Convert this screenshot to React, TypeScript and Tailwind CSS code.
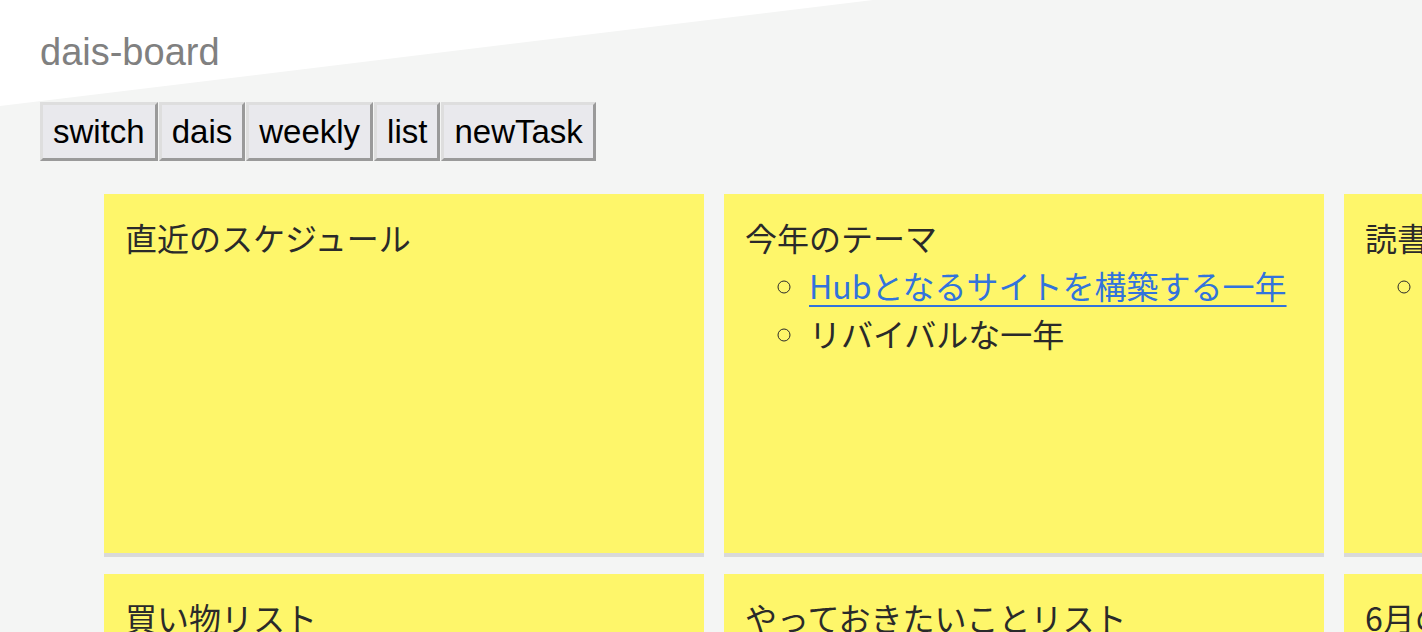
import React from "react";

interface Card {
  title: string;
  items?: { text: string; href?: string }[];
}

const cards: Card[] = [
  { title: "直近のスケジュール" },
  {
    title: "今年のテーマ",
    items: [
      { text: "Hubとなるサイトを構築する一年", href: "#" },
      { text: "リバイバルな一年" },
    ],
  },
  { title: "読書", items: [{ text: "読みたい本" }] },
  { title: "買い物リスト" },
  { title: "やっておきたいことリスト" },
  { title: "6月の目標" },
];

const buttons = ["switch", "dais", "weekly", "list", "newTask"];

export default function App() {
  return (
    <div
      className="relative h-[632px] w-full overflow-hidden bg-[#f4f5f4]"
      style={{ fontFamily: '"Liberation Sans", "Noto Sans CJK JP", sans-serif' }}
    >
      <svg className="absolute left-0 top-0" width="880" height="110">
        <polygon points="0,0 873,0 0,106" fill="#ffffff" />
      </svg>

      <div className="relative px-10">
        <h1 className="pt-[30px] text-[38px] leading-[44px] text-[#808080]">dais-board</h1>

        <div className="mt-[28px] flex">
          {buttons.map((b) => (
            <button
              key={b}
              className="mr-px h-[59px] border-[3px] border-t-[#dedede] border-l-[#dedede] border-b-[#9a9a9a] border-r-[#9a9a9a] bg-[#e9e9ed] px-[10px] text-[33px] leading-none text-black"
            >
              {b}
            </button>
          ))}
        </div>

        <div className="ml-16 mt-[33px] grid grid-cols-[600px_600px_600px] gap-x-5 gap-y-[17px]">
          {cards.map((c) => (
            <div
              key={c.title}
              className="h-[363px] border-b-4 border-[#d9d9d9] bg-[#fef66a] px-[21px] pt-[19px] text-[32px] leading-[48px] text-[#2a2a2a]"
              style={{ fontFamily: '"Noto Sans CJK JP", sans-serif' }}
            >
              <div>{c.title}</div>
              {c.items && (
                <ul className="list-[circle] pl-16">
                  {c.items.map((it) => (
                    <li key={it.text}>
                      {it.href ? (
                        <a href={it.href} className="text-[#3273dc] underline decoration-2 underline-offset-[6px]">
                          {it.text}
                        </a>
                      ) : (
                        it.text
                      )}
                    </li>
                  ))}
                </ul>
              )}
            </div>
          ))}
        </div>
      </div>
    </div>
  );
}
